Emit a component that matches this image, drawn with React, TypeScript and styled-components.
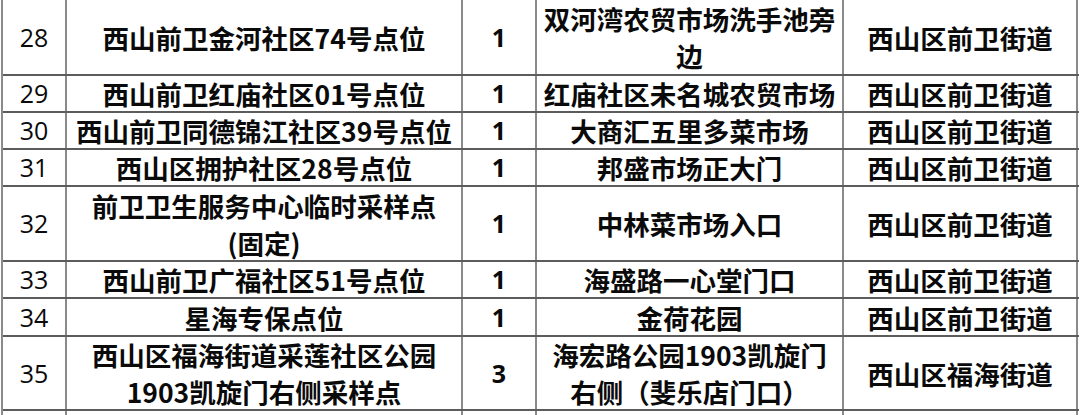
import React from "react";
import styled, { createGlobalStyle } from "styled-components";

const GlobalStyle = createGlobalStyle`
  html, body {
    margin: 0;
    padding: 0;
    background: #ffffff;
    overflow: hidden;
  }
  body {
    font-family: "Noto Sans CJK SC", "Noto Sans", sans-serif;
  }
`;

const Table = styled.div`
  width: 1078px;
  margin-left: 1px;
  border-left: 2px solid #8a8a8a;
  box-sizing: border-box;
`;

const Row = styled.div<{ $h: number; $open?: boolean }>`
  display: grid;
  grid-template-columns: 64px 396px 74px 307px 234px;
  height: ${(p) => p.$h}px;
  border-bottom: ${(p) => (p.$open ? "none" : "2px solid #5c5c5c")};
  box-sizing: border-box;
`;

const Cell = styled.div<{ $kind?: "num" | "count" | "text" }>`
  display: flex;
  align-items: center;
  justify-content: center;
  text-align: center;
  border-right: 2px solid #8a8a8a;
  box-sizing: border-box;
  color: #0a0a0a;
  white-space: nowrap;
  min-height: 0;
  font-family: ${(p) =>
    p.$kind === "num"
      ? `"Open Sans", "Liberation Sans", sans-serif`
      : p.$kind === "count"
      ? `"Open Sans", "Noto Sans", sans-serif`
      : `"Noto Sans CJK SC", "Noto Sans", sans-serif`};
  font-weight: ${(p) => (p.$kind === "num" ? 400 : 700)};
  font-size: ${(p) => (p.$kind === "num" ? "25px" : p.$kind === "count" ? "25px" : "26.5px")};
  line-height: 35px;
`;

const Lines = styled.div`
  display: flex;
  flex-direction: column;
  align-items: center;
  gap: 2px;
`;

type Item = {
  no: string;
  name: string[];
  count: string;
  place: string[];
  district: string;
  h: number;
  open?: boolean;
};

const rows: Item[] = [
  { no: "28", name: ["西山前卫金河社区74号点位"], count: "1", place: ["双河湾农贸市场洗手池旁", "边"], district: "西山区前卫街道", h: 76 },
  { no: "29", name: ["西山前卫红庙社区01号点位"], count: "1", place: ["红庙社区未名城农贸市场"], district: "西山区前卫街道", h: 37 },
  { no: "30", name: ["西山前卫同德锦江社区39号点位"], count: "1", place: ["大商汇五里多菜市场"], district: "西山区前卫街道", h: 37 },
  { no: "31", name: ["西山区拥护社区28号点位"], count: "1", place: ["邦盛市场正大门"], district: "西山区前卫街道", h: 37 },
  { no: "32", name: ["前卫卫生服务中心临时采样点", "(固定)"], count: "1", place: ["中林菜市场入口"], district: "西山区前卫街道", h: 75 },
  { no: "33", name: ["西山前卫广福社区51号点位"], count: "1", place: ["海盛路一心堂门口"], district: "西山区前卫街道", h: 37 },
  { no: "34", name: ["星海专保点位"], count: "1", place: ["金荷花园"], district: "西山区前卫街道", h: 38 },
  { no: "35", name: ["西山区福海街道采莲社区公园", "1903凯旋门右侧采样点"], count: "3", place: ["海宏路公园1903凯旋门", "右侧（斐乐店门口）"], district: "西山区福海街道", h: 74 },
  { no: "", name: [], count: "", place: [], district: "", h: 4, open: true },
];

const MultiLine: React.FC<{ lines: string[] }> = ({ lines }) => (
  <Lines>
    {lines.map((l, i) => (
      <span key={i}>{l}</span>
    ))}
  </Lines>
);

export default function App() {
  return (
    <>
      <GlobalStyle />
      <Table>
        {rows.map((r, i) => (
          <Row key={i} $h={r.h} $open={r.open}>
            <Cell $kind="num">{r.no}</Cell>
            <Cell $kind="text">
              <MultiLine lines={r.name} />
            </Cell>
            <Cell $kind="count">{r.count}</Cell>
            <Cell $kind="text">
              <MultiLine lines={r.place} />
            </Cell>
            <Cell $kind="text">{r.district}</Cell>
          </Row>
        ))}
      </Table>
    </>
  );
}
